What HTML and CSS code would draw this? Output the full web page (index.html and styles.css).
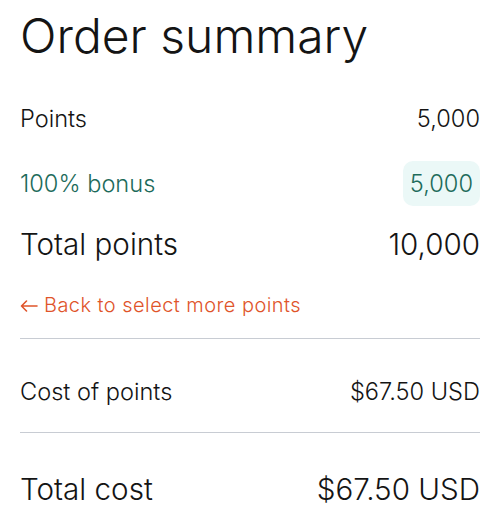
FILE: index.html
```html
<!DOCTYPE html>
<html lang="en">
  <head>
    <meta charset="UTF-8">
    <meta name="viewport" content="width=device-width, initial-scale=1.0">
    <link rel="stylesheet" href="styles.css">
    <title>Order summary</title>
  </head>
  <body>
    <div class="summary">
      <h1>Order summary</h1>

      <div class="row points">
        <span>Points</span>
        <span>5,000</span>
      </div>
      <div class="row bonus">
        <span>100% bonus</span>
        <span class="pill">5,000</span>
      </div>
      <div class="row total">
        <span>Total points</span>
        <span>10,000</span>
      </div>

      <a class="back" href="#">
        <svg class="arrow" width="18" height="12" viewBox="0 0 18 12" fill="none" stroke="currentColor" stroke-width="1.6" stroke-linecap="round" stroke-linejoin="round">
          <path d="M17 6H1.5M6.5 1L1.5 6l5 5"/>
        </svg>
        Back to select more points
      </a>

      <div class="row cost">
        <span>Cost of points</span>
        <span>$67.50 USD</span>
      </div>
      <div class="row total grand">
        <span>Total cost</span>
        <span>$67.50 USD</span>
      </div>
    </div>
  </body>
</html>
```

FILE: styles.css
```css
body {
  font-family: Inter, "Noto Sans", sans-serif;
  font-weight: 350;
  background-color: #ffffff;
  color: #141414;
  margin: 0;
}

.summary {
  padding: 8px 20px 0;
}

h1 {
  font-size: 48px;
  font-weight: 350;
  margin: 0;
  line-height: 56px;
}

.row {
  display: flex;
  justify-content: space-between;
  align-items: center;
  height: 46px;
  font-size: 23.6px;
}

.points {
  margin-top: 31px;
}

.bonus {
  color: #1d6b5b;
  margin-top: 19px;
}

.pill {
  background-color: #ebf8f7;
  border-radius: 10px;
  line-height: 45px;
  padding: 0 7px;
}

.total {
  font-size: 29.6px;
  margin-top: 15px;
}

.back {
  display: flex;
  align-items: center;
  gap: 6px;
  color: #e0542a;
  text-decoration: none;
  font-size: 20px;
  letter-spacing: 0.45px;
  height: 46px;
  margin-top: 15px;
  padding-bottom: 10px;
  border-bottom: 1px solid #c8ccd3;
}

.arrow {
  flex-shrink: 0;
  margin-top: 1px;
}

.cost {
  box-sizing: content-box;
  padding: 29px 0 18px;
  border-bottom: 1px solid #c8ccd3;
}

.grand {
  margin-top: 33px;
}
```
